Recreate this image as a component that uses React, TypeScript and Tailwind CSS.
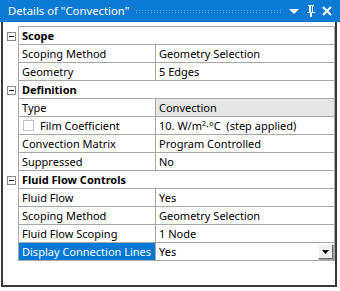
import React from "react";

type Row =
  | { kind: "header"; label: string }
  | { kind: "data"; label: string; value: React.ReactNode; check?: boolean; grey?: boolean; selected?: boolean; dropdown?: boolean };

const rows: Row[] = [
  { kind: "header", label: "Scope" },
  { kind: "data", label: "Scoping Method", value: "Geometry Selection" },
  { kind: "data", label: "Geometry", value: "5 Edges" },
  { kind: "header", label: "Definition" },
  { kind: "data", label: "Type", value: "Convection", grey: true },
  {
    kind: "data",
    label: "Film Coefficient",
    check: true,
    value: (
      <span className="whitespace-pre">
        10. W/m<sup className="text-[7px] -top-[4px]">2</sup>·°C  (step applied)
      </span>
    ),
  },
  { kind: "data", label: "Convection Matrix", value: "Program Controlled" },
  { kind: "data", label: "Suppressed", value: "No" },
  { kind: "header", label: "Fluid Flow Controls" },
  { kind: "data", label: "Fluid Flow", value: "Yes" },
  { kind: "data", label: "Scoping Method", value: "Geometry Selection" },
  { kind: "data", label: "Fluid Flow Scoping", value: "1 Node" },
  { kind: "data", label: "Display Connection Lines", value: "Yes", selected: true, dropdown: true },
];

function ExpandBox() {
  return (
    <div className="w-[9px] h-[9px] border border-[#8a8a8a] bg-white flex items-center justify-center">
      <div className="w-[5px] h-[1px] bg-[#222]" />
    </div>
  );
}

export default function App() {
  return (
    <div className="w-[340px] h-[291px] bg-white font-['Noto_Sans',sans-serif] text-[11px] text-black overflow-hidden">
      <div className="h-[22px] bg-[#0a7ad4] flex items-center pl-[8px] pr-[8px] text-white">
        <span className="text-[11.3px] leading-none whitespace-nowrap">Details of "Convection"</span>
        <div className="flex-1 ml-[6px] mr-[7px] h-[5px] bg-[radial-gradient(circle,#6fb0e6_0.6px,transparent_0.7px)] bg-[length:3px_2.5px]" />
        <svg width="10" height="6" viewBox="0 0 10 6" className="mr-[7px] mt-[2px]">
          <path d="M0 0 H10 L5 5 Z" fill="white" />
        </svg>
        <svg width="10" height="14" viewBox="0 0 10 14" className="mr-[6px]">
          <path d="M2 1 H8 V2 H7 V8 H9 V9 H1 V8 H3 V2 H2 Z" fill="white" />
          <rect x="5" y="2" width="1" height="6" fill="#0a7ad4" />
          <rect x="4" y="9" width="2" height="4" fill="white" />
        </svg>
        <svg width="10" height="10" viewBox="0 0 10 10">
          <path d="M1 1 L9 9 M9 1 L1 9" stroke="white" strokeWidth="2" />
        </svg>
      </div>
      <div className="ml-[1px] w-[336px] h-[265px] border-l-[2px] border-r-[2px] border-b-[2px] border-[#3a3a3a] pt-[5px]">
        <div className="flex flex-col">
          {rows.map((r, i) => (
            <div key={i} className="flex h-[18px]">
              <div className="w-[15px] flex items-center justify-center pl-[2px]">
                {r.kind === "header" && <ExpandBox />}
              </div>
              <div
                className={`w-[317px] flex border-l border-r border-b border-[#a8a8a8] ${i === 0 ? "border-t h-[19px] -mt-[1px]" : ""}`}
              >
                {r.kind === "header" ? (
                  <div className="flex-1 flex items-center pl-[3px] font-bold leading-none">{r.label}</div>
                ) : (
                  <>
                    <div
                      className={`w-[137px] border-r border-[#a8a8a8] flex items-center pl-[3px] leading-none whitespace-nowrap ${
                        r.selected ? "bg-[#0078d7] text-white" : ""
                      }`}
                    >
                      {r.check && (
                        <div className="w-[11px] h-[11px] border border-[#c4c4c4] bg-white mr-[6px] ml-[1px]" />
                      )}
                      {r.label}
                    </div>
                    <div
                      className={`flex-1 flex items-center pl-[3px] leading-none whitespace-nowrap ${
                        r.grey ? "bg-[#e6e6e6]" : ""
                      }`}
                    >
                      <span className="flex-1">{r.value}</span>
                      {r.dropdown && (
                        <div className="w-[15px] h-[15px] mr-[1px] bg-[#f0f0f0] border-t border-l border-[#ffffff] border-r border-b border-r-[#6d6d6d] border-b-[#6d6d6d] shadow-[1px_1px_0_#a0a0a0] flex items-center justify-center">
                          <svg width="7" height="4" viewBox="0 0 7 4">
                            <path d="M0 0 H7 L3.5 4 Z" fill="black" />
                          </svg>
                        </div>
                      )}
                    </div>
                  </>
                )}
              </div>
            </div>
          ))}
        </div>
      </div>
    </div>
  );
}
